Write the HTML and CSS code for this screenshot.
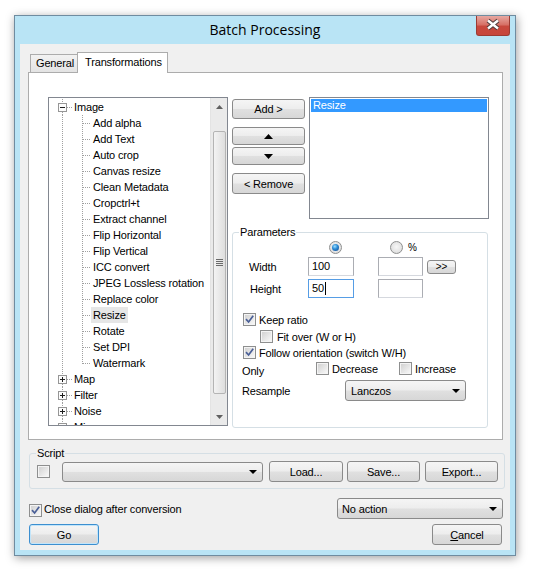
FILE: index.html
```html
<!DOCTYPE html>
<html>
<head>
<meta charset="utf-8">
<link rel="stylesheet" href="styles.css">
</head>
<body>
<div class="window">
  <div class="titlebar">
    <div></div>
    <div class="title">Batch Processing</div>
    <div class="close">
      <svg width="34" height="20" viewBox="0 0 34 20"><path d="M12 5.5L22 13.5M22 5.5L12 13.5" stroke="#4d3a3a" stroke-width="4.4" fill="none"/><path d="M12 5.5L22 13.5M22 5.5L12 13.5" stroke="#fff" stroke-width="2.4" fill="none"/></svg>
    </div>
  </div>
  <div class="client">
    <div class="tabs">
      <div class="tab general">General</div>
      <div class="tab active">Transformations</div>
    </div>
    <div class="panel">
      <div class="tree">
        <div class="tree-items">
          <div class="trow"><svg width="25" height="16" viewBox="0 0 25 16"><path class="dot" d="M13.5 0V4M13.5 13V16M18 8.5H24"/><rect class="ebox" x="9.5" y="4.5" width="8" height="8"/><path class="sign" d="M11 8.5H16"/></svg><span>Image</span></div>
          <div class="trow"><svg width="44" height="16" viewBox="0 0 44 16"><path class="dot" d="M13.5 0V16M33.5 0V16M34 8.5H42"/></svg><span>Add alpha</span></div>
          <div class="trow"><svg width="44" height="16" viewBox="0 0 44 16"><path class="dot" d="M13.5 0V16M33.5 0V16M34 8.5H42"/></svg><span>Add Text</span></div>
          <div class="trow"><svg width="44" height="16" viewBox="0 0 44 16"><path class="dot" d="M13.5 0V16M33.5 0V16M34 8.5H42"/></svg><span>Auto crop</span></div>
          <div class="trow"><svg width="44" height="16" viewBox="0 0 44 16"><path class="dot" d="M13.5 0V16M33.5 0V16M34 8.5H42"/></svg><span>Canvas resize</span></div>
          <div class="trow"><svg width="44" height="16" viewBox="0 0 44 16"><path class="dot" d="M13.5 0V16M33.5 0V16M34 8.5H42"/></svg><span>Clean Metadata</span></div>
          <div class="trow"><svg width="44" height="16" viewBox="0 0 44 16"><path class="dot" d="M13.5 0V16M33.5 0V16M34 8.5H42"/></svg><span>Cropctrl+t</span></div>
          <div class="trow"><svg width="44" height="16" viewBox="0 0 44 16"><path class="dot" d="M13.5 0V16M33.5 0V16M34 8.5H42"/></svg><span>Extract channel</span></div>
          <div class="trow"><svg width="44" height="16" viewBox="0 0 44 16"><path class="dot" d="M13.5 0V16M33.5 0V16M34 8.5H42"/></svg><span>Flip Horizontal</span></div>
          <div class="trow"><svg width="44" height="16" viewBox="0 0 44 16"><path class="dot" d="M13.5 0V16M33.5 0V16M34 8.5H42"/></svg><span>Flip Vertical</span></div>
          <div class="trow"><svg width="44" height="16" viewBox="0 0 44 16"><path class="dot" d="M13.5 0V16M33.5 0V16M34 8.5H42"/></svg><span>ICC convert</span></div>
          <div class="trow"><svg width="44" height="16" viewBox="0 0 44 16"><path class="dot" d="M13.5 0V16M33.5 0V16M34 8.5H42"/></svg><span>JPEG Lossless rotation</span></div>
          <div class="trow"><svg width="44" height="16" viewBox="0 0 44 16"><path class="dot" d="M13.5 0V16M33.5 0V16M34 8.5H42"/></svg><span>Replace color</span></div>
          <div class="trow"><svg width="44" height="16" viewBox="0 0 44 16"><path class="dot" d="M13.5 0V16M33.5 0V16M34 8.5H42"/></svg><span class="hl">Resize</span></div>
          <div class="trow"><svg width="44" height="16" viewBox="0 0 44 16"><path class="dot" d="M13.5 0V16M33.5 0V16M34 8.5H42"/></svg><span>Rotate</span></div>
          <div class="trow"><svg width="44" height="16" viewBox="0 0 44 16"><path class="dot" d="M13.5 0V16M33.5 0V16M34 8.5H42"/></svg><span>Set DPI</span></div>
          <div class="trow"><svg width="44" height="16" viewBox="0 0 44 16"><path class="dot" d="M13.5 0V16M33.5 0V9M34 8.5H42"/></svg><span>Watermark</span></div>
          <div class="trow"><svg width="25" height="16" viewBox="0 0 25 16"><path class="dot" d="M13.5 0V4M13.5 13V16M18 8.5H24"/><rect class="ebox" x="9.5" y="4.5" width="8" height="8"/><path class="sign" d="M11 8.5H16M13.5 6V11"/></svg><span>Map</span></div>
          <div class="trow"><svg width="25" height="16" viewBox="0 0 25 16"><path class="dot" d="M13.5 0V4M13.5 13V16M18 8.5H24"/><rect class="ebox" x="9.5" y="4.5" width="8" height="8"/><path class="sign" d="M11 8.5H16M13.5 6V11"/></svg><span>Filter</span></div>
          <div class="trow"><svg width="25" height="16" viewBox="0 0 25 16"><path class="dot" d="M13.5 0V4M13.5 13V16M18 8.5H24"/><rect class="ebox" x="9.5" y="4.5" width="8" height="8"/><path class="sign" d="M11 8.5H16M13.5 6V11"/></svg><span>Noise</span></div>
          <div class="trow"><svg width="25" height="16" viewBox="0 0 25 16"><path class="dot" d="M13.5 0V4M13.5 13V16M18 8.5H24"/><rect class="ebox" x="9.5" y="4.5" width="8" height="8"/><path class="sign" d="M11 8.5H16M13.5 6V11"/></svg><span>Misc</span></div>
        </div>
        <div class="vscroll">
          <div class="sb-arrow"><svg width="7" height="4" viewBox="0 0 7 4"><path d="M0 4H7L3.5 0Z" fill="#606060"/></svg></div>
          <div class="thumb"><svg width="7" height="7" viewBox="0 0 7 7"><path d="M0 0.5H7M0 2.5H7M0 4.5H7M0 6.5H7" stroke="#6a6a6a" stroke-width="1"/></svg></div>
          <div class="sb-gap"></div>
          <div class="sb-arrow"><svg width="7" height="4" viewBox="0 0 7 4"><path d="M0 0H7L3.5 4Z" fill="#606060"/></svg></div>
        </div>
      </div>
      <div class="col2">
        <div class="top">
          <div class="btncol">
            <div class="btn add">Add &gt;</div>
            <div class="btn arrow up"><svg width="9" height="5" viewBox="0 0 9 5"><path d="M0 5H9L4.5 0Z"/></svg></div>
            <div class="btn arrow down"><svg width="9" height="5" viewBox="0 0 9 5"><path d="M0 0H9L4.5 5Z"/></svg></div>
            <div class="btn remove">&lt; Remove</div>
          </div>
          <div class="listbox"><div class="sel">Resize</div></div>
        </div>
        <div class="group params">
          <div class="legend">Parameters</div>
          <div class="prow radios">
            <span class="rd on"><b></b></span>
            <span class="rd second"></span>
            <span class="pct">%</span>
          </div>
          <div class="prow fields">
            <span class="plabel">Width</span>
            <span class="tb w1">100</span>
            <span class="tb w2"></span>
            <span class="btn small">&gt;&gt;</span>
          </div>
          <div class="prow fields f2">
            <span class="plabel hlab">Height</span>
            <span class="tb w1 focus">50<i class="caret"></i></span>
            <span class="tb w2"></span>
          </div>
          <div class="prow chk keep"><span class="cb on"><b><svg width="9" height="9" viewBox="0 0 9 9"><path d="M1 4.2L3.6 7L8.2 0.8" fill="none" stroke="#4a5f97" stroke-width="1.7"/></svg></b></span><span class="ctext">Keep ratio</span></div>
          <div class="prow chk fit"><span class="cb"><b></b></span><span class="ctext">Fit over (W or H)</span></div>
          <div class="prow chk follow"><span class="cb on"><b><svg width="9" height="9" viewBox="0 0 9 9"><path d="M1 4.2L3.6 7L8.2 0.8" fill="none" stroke="#4a5f97" stroke-width="1.7"/></svg></b></span><span class="ctext">Follow orientation (switch W/H)</span></div>
          <div class="prow only">
            <span class="onlylab">Only</span>
            <span class="citem dec"><span class="cb"><b></b></span><span class="ctext">Decrease</span></span>
            <span class="citem"><span class="cb"><b></b></span><span class="ctext">Increase</span></span>
          </div>
          <div class="prow resample">
            <span class="rlab">Resample</span>
            <span class="combo lanczos"><span>Lanczos</span><svg width="8" height="4" viewBox="0 0 8 4"><path d="M0 0H8L4 4Z"/></svg></span>
          </div>
        </div>
      </div>
    </div>
    <div class="group script">
      <div class="legend">Script</div>
      <div class="srow">
        <span class="cb"><b></b></span>
        <span class="combo scombo"><span></span><svg width="8" height="4" viewBox="0 0 8 4"><path d="M0 0H8L4 4Z"/></svg></span>
        <span class="btn load">Load...</span>
        <span class="btn save">Save...</span>
        <span class="btn export">Export...</span>
      </div>
    </div>
    <div class="brow1">
      <span class="cb on close-cb"><b><svg width="9" height="9" viewBox="0 0 9 9"><path d="M1 4.2L3.6 7L8.2 0.8" fill="none" stroke="#4a5f97" stroke-width="1.7"/></svg></b></span>
      <span class="ctext closetext">Close dialog after conversion</span>
      <span class="combo noaction"><span>No action</span><svg width="8" height="4" viewBox="0 0 8 4"><path d="M0 0H8L4 4Z"/></svg></span>
    </div>
    <div class="brow2">
      <span class="btn go">Go</span>
      <span class="btn cancel"><u>C</u>ancel</span>
    </div>
  </div>
</div>
</body>
</html>
```

FILE: styles.css
```css
* { box-sizing: border-box; }

body {
  margin: 0;
  width: 534px;
  height: 575px;
  overflow: hidden;
  background: #ffffff;
  font-family: "Liberation Sans", Arial, sans-serif;
  font-size: 11px;
  letter-spacing: -0.15px;
  color: #000;
}

.window {
  margin: 15px 0 0 14px;
  width: 502px;
  height: 541px;
  border: 1px solid #6f8ca0;
  background: #b9e4f5;
  box-shadow: 1px 2px 9px rgba(0, 0, 0, 0.38);
  display: flex;
  flex-direction: column;
}

.titlebar {
  height: 28px;
  display: grid;
  grid-template-columns: 1fr auto 1fr;
  align-items: start;
}

.title {
  font-family: "Open Sans", "Liberation Sans", sans-serif;
  font-size: 14px;
  letter-spacing: 0;
  line-height: 28px;
  color: #000;
}

.close {
  justify-self: end;
  margin-right: 5px;
  width: 34px;
  height: 20px;
  border: 1px solid #9c3b33;
  border-top: none;
  border-radius: 0 0 3px 3px;
  background: linear-gradient(#e7a8a1 0%, #d77167 45%, #c8483d 55%, #c7463b 100%);
}

.close svg { display: block; margin: -1px 0 0 -1px; }

.client {
  margin: 0 5px 5px 5px;
  height: 506px;
  background: #f0f0f0;
  display: flex;
  flex-direction: column;
  padding-top: 8px;
}

/* tabs */
.tabs {
  display: flex;
  align-items: flex-end;
  height: 20px;
  padding-left: 10px;
  position: relative;
  z-index: 1;
}

.tab {
  height: 18px;
  border: 1px solid #acacac;
  border-bottom: none;
  background: linear-gradient(#f2f2f2, #e3e3e3);
  line-height: 17px;
  white-space: nowrap;
}

.tab.general { width: 48px; padding-left: 5px; }

.tab.active {
  width: 91px;
  height: 21px;
  margin-left: -1px;
  margin-bottom: -1px;
  padding-left: 7px;
  line-height: 18px;
  background: #ffffff;
}

.panel {
  margin-left: 8px;
  width: 475px;
  height: 368px;
  background: #ffffff;
  border: 1px solid #acacac;
  display: flex;
  align-items: flex-start;
  padding: 24px 0 0 19px;
}

/* tree */
.tree {
  width: 180px;
  height: 329px;
  border: 1px solid #828790;
  display: flex;
  background: #fff;
}

.tree-items {
  flex: 1;
  overflow: hidden;
  padding-top: 1px;
}

.trow {
  height: 16px;
  display: flex;
  align-items: center;
  white-space: nowrap;
}

.trow svg { display: block; flex: none; }

.trow span {
  margin-left: -2px;
  padding: 0 2px;
  line-height: 16px;
}

.trow span.hl { background: #e6e6e6; }

.dot {
  fill: none;
  stroke: #a0a0a0;
  stroke-width: 1;
  stroke-dasharray: 1 1;
}

.ebox { fill: #fcfcfc; stroke: #969696; stroke-width: 1; }
.sign { stroke: #1e1e1e; stroke-width: 1; fill: none; }

.vscroll {
  width: 17px;
  flex: none;
  background: #eaeaea;
  border-left: 1px solid #e3e3e3;
  display: flex;
  flex-direction: column;
  align-items: center;
}

.sb-arrow {
  width: 100%;
  height: 17px;
  display: flex;
  align-items: center;
  justify-content: center;
}

.thumb {
  margin-top: 16px;
  width: 13px;
  height: 263px;
  border: 1px solid #b4b4b4;
  border-radius: 2px;
  background: linear-gradient(90deg, #f3f3f3, #dedede);
  display: flex;
  align-items: center;
  justify-content: center;
}

.sb-gap { flex: 1; }

/* right column */
.col2 {
  margin-left: 4px;
  display: flex;
  flex-direction: column;
}

.top { display: flex; height: 122px; }

.btncol {
  width: 73px;
  display: flex;
  flex-direction: column;
}

.btn {
  display: flex;
  align-items: center;
  justify-content: center;
  border: 1px solid #8a8a8a;
  border-radius: 3px;
  background: linear-gradient(#f5f5f5 0%, #ededed 48%, #e0e0e0 52%, #d7d7d7 100%);
  white-space: nowrap;
  flex: none;
}

.btn svg { display: block; }

.btn.add { height: 20px; margin-top: 2px; }
.btn.up { height: 18px; margin-top: 8px; }
.btn.down { height: 18px; margin-top: 2px; }
.btn.remove { height: 21px; margin-top: 8px; }

.listbox {
  margin-left: 4px;
  width: 180px;
  height: 122px;
  border: 1px solid #828790;
  background: #fff;
  padding: 1px;
}

.sel {
  height: 13px;
  line-height: 13px;
  padding-left: 2px;
  background: #3399ff;
  color: #fff;
}

/* group boxes */
.group {
  border: 1px solid #d5dfe5;
  border-radius: 3px;
  display: flex;
  flex-direction: column;
}

.legend {
  align-self: flex-start;
  margin: -7px 0 0 6px;
  padding: 0 1px;
  height: 13px;
  line-height: 13px;
  background: #fff;
}

.params {
  margin-top: 13px;
  width: 256px;
  height: 196px;
  background: #fff;
}

.prow { display: flex; align-items: center; flex: none; }

.radios { margin-top: 2px; height: 13px; padding-left: 96px; }

.rd {
  width: 13px;
  height: 13px;
  flex: none;
  border-radius: 50%;
  border: 1px solid #8e8f8f;
  background: radial-gradient(circle at 50% 45%, #f7f7f7 0%, #e4e4e4 60%, #d0d0d0 100%);
  display: flex;
  align-items: center;
  justify-content: center;
}

.rd.on b {
  width: 7px;
  height: 7px;
  border-radius: 50%;
  background: radial-gradient(circle at 40% 35%, #9fe0ff 0%, #2f8fd8 40%, #0c3f87 100%);
}

.rd.second { margin-left: 48px; }
.pct { margin-left: 5px; font-size: 10px; }

.fields { margin-top: 3px; height: 19px; }

.plabel { width: 75px; padding-left: 16px; flex: none; }
.plabel.hlab { padding-left: 17px; }

.tb {
  height: 19px;
  border: 1px solid #abadb3;
  border-bottom-color: #d5d8de;
  background: #fff;
  padding-left: 3px;
  line-height: 17px;
  display: flex;
  align-items: center;
  flex: none;
}

.tb.w1 { width: 46px; }
.tb.w2 { width: 45px; margin-left: 24px; }
.tb.focus { border-color: #569de5; }

.caret {
  display: block;
  width: 1px;
  height: 13px;
  background: #000;
  margin-left: 1px;
}

.btn.small {
  margin-left: 4px;
  width: 29px;
  height: 14px;
  font-size: 10px;
  align-self: center;
}

.cb {
  width: 13px;
  height: 13px;
  flex: none;
  border: 1px solid #8e8f8f;
  padding: 1px;
  background: #f4f4f4;
  display: block;
}

.cb b {
  display: block;
  width: 9px;
  height: 9px;
  background: linear-gradient(135deg, #d2d2d2, #f7f7f7);
}

.cb svg { display: block; overflow: visible; }

.ctext { margin-left: 3px; white-space: nowrap; }

.chk { height: 13px; }
.keep { margin-top: 15px; padding-left: 10px; }
.fit { margin-top: 4px; padding-left: 27px; }
.fit .ctext { margin-left: 4px; }
.follow { margin-top: 3px; padding-left: 10px; }

.only { margin-top: 3px; height: 13px; padding-left: 9px; align-items: flex-start; }
.onlylab { width: 74px; flex: none; padding-top: 3px; }
.citem { display: flex; align-items: center; width: 83px; flex: none; }

.resample { margin-top: 5px; height: 21px; padding-left: 9px; }
.rlab { width: 103px; flex: none; }

.combo {
  display: flex;
  align-items: center;
  justify-content: space-between;
  height: 21px;
  border: 1px solid #8a8a8a;
  border-radius: 3px;
  background: linear-gradient(#f5f5f5 0%, #ededed 48%, #e0e0e0 52%, #d7d7d7 100%);
  padding: 0 5px 0 4px;
  flex: none;
  white-space: nowrap;
}

.combo svg { display: block; flex: none; }

.combo.lanczos { width: 121px; padding-left: 5px; }

/* script group */
.script {
  margin: 13px 0 0 9px;
  width: 476px;
  height: 36px;
}

.script .legend { background: #f0f0f0; }

.srow {
  margin-top: 1px;
  height: 21px;
  padding-left: 7px;
  display: flex;
  align-items: center;
}

.scombo { width: 201px; height: 20px; margin-left: 12px; }
.btn.load { width: 74px; height: 21px; margin-left: 6px; }
.btn.save { width: 73px; height: 21px; margin-left: 4px; }
.btn.export { width: 73px; height: 21px; margin-left: 5px; }

/* bottom */
.brow1 {
  margin-top: 9px;
  height: 21px;
  padding-left: 9px;
  display: flex;
  align-items: center;
}

.close-cb { margin-top: 3px; }
.closetext { margin-left: 2px; margin-top: 1px; }

.combo.noaction {
  margin-left: auto;
  margin-right: 7px;
  width: 166px;
}

.brow2 {
  margin-top: 5px;
  height: 21px;
  display: flex;
}

.btn.go {
  margin-left: 9px;
  width: 70px;
  height: 21px;
  border-color: #3c8fd0;
  box-shadow: inset 0 0 0 1px #c2e5fa;
}

.btn.cancel {
  margin-left: auto;
  margin-right: 8px;
  width: 70px;
  height: 21px;
}

.btn.cancel u { text-decoration: underline; }
```
